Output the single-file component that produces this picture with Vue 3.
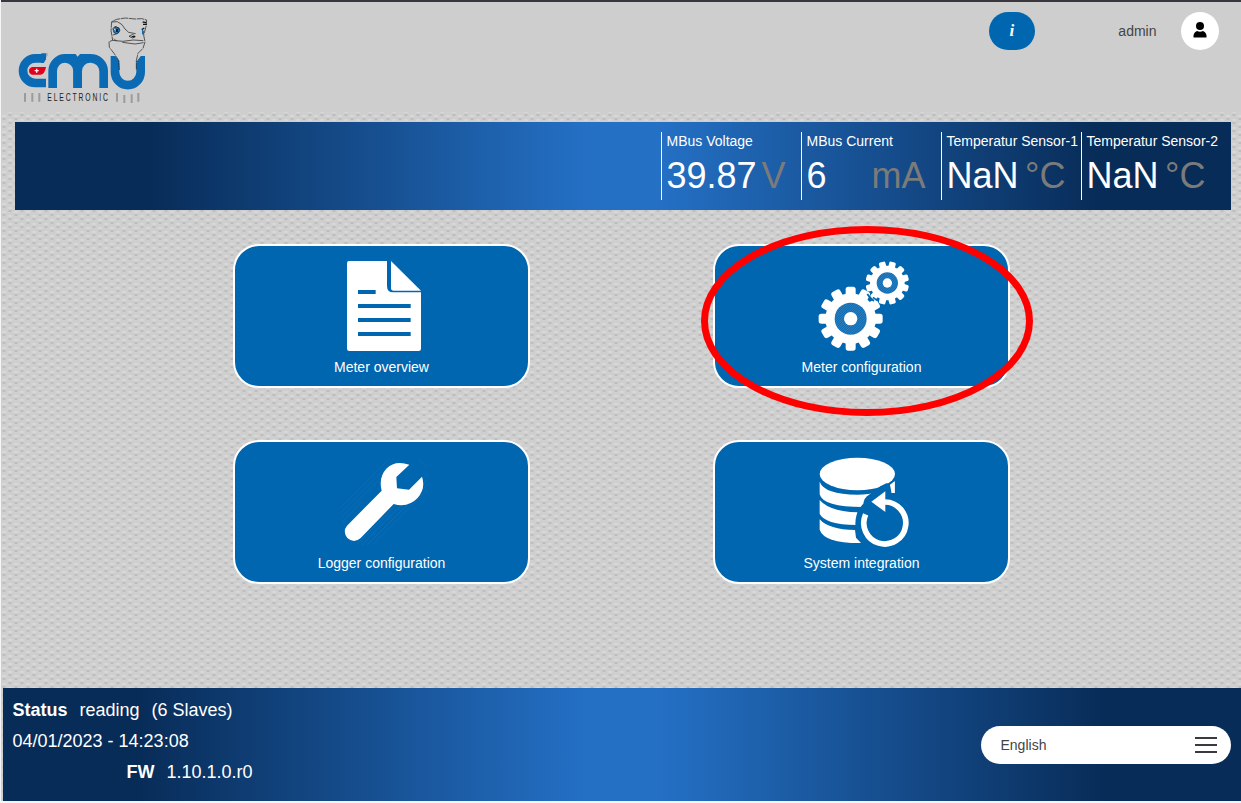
<script setup>
const gauges = [
  { label: 'MBus Voltage', value: '39.87', unit: 'V' },
  { label: 'MBus Current', value: '6', unit: 'mA' },
  { label: 'Temperatur Sensor-1', value: 'NaN', unit: '°C' },
  { label: 'Temperatur Sensor-2', value: 'NaN', unit: '°C' },
]
const tiles = [
  { id: 'doc', label: 'Meter overview' },
  { id: 'gears', label: 'Meter configuration', marked: true },
  { id: 'wrench', label: 'Logger configuration' },
  { id: 'database', label: 'System integration' },
]
const range = (n) => Array.from({ length: n }, (_, i) => i)
</script>

<template>
  <div class="page">
    <header class="top">
      <svg class="logo" viewBox="0 0 450 315" aria-label="EMU Electronic">
        <g transform="translate(-45 -45)">
          <g fill="none" stroke="#0a6ab3" stroke-width="26">
            <path d="M138 175H106A37 37 0 0 0 106 249H138" />
            <path d="M158 264V214A37 39 0 0 1 195 175A38 39 0 0 1 233 214V264" />
            <path d="M233 264V214A38 39 0 0 1 272 175A39 39 0 0 1 311 214V264" />
            <path d="M345 168V216A38 39 0 0 0 422 216V168" />
          </g>
          <path d="M190 162H277L244 186H222Z" fill="#0a6ab3" />
          <path d="M225 160H242L233 170Z" fill="#cecece" />
          <path d="M124 160H142V166L132 189H124Z" fill="#0a6ab3" />
          <path d="M139 160V176L131 190H142V160Z" fill="#cecece" />
          <path d="M331 164L344 166 357 183H360V150H331ZM408 183H411L424 166 437 164V150H408Z" fill="#cecece" />
          <path d="M97 201H138Q134 224 121 224H97Q87 221 87 212Q87 204 97 201Z" fill="#e2001a" />
          <path d="M110 206V218M104 212H116" stroke="#fff" stroke-width="4" />
          <g fill="none" stroke="#171717" stroke-width="2">
            <path d="M358 210L356 181 342 160 328 142 327 125 338 121 333 92 335 65 350 58 376 54 405 57 425 56 440 60 438 80 431 105 435 126 429 145 414 160 409 182V208" stroke-dasharray="22 2" />
            <path d="M336 66L352 65 366 74 375 87 386 97 407 101 M338 105Q347 104 354 99Q363 92 358 85L345 79 336 89 M338 121L368 124 400 120 430 122M342 116L350 124M367 127L405 132 431 128M398 103L387 109 398 114 406 110Z" />
            <path d="M428 66L439 68M429 73H441M425 89L433 84M395 110H405" stroke-width="4" />
          </g>
          <ellipse cx="349" cy="91" rx="9" ry="10" fill="#2a7fc2" stroke="#171717" stroke-width="2" />
          <path d="M351 86v10" stroke="#111" stroke-width="5" />
          <path d="M343 86l3 5" stroke="#fff" stroke-width="3" />
          <path d="M426 88L432 94V104L426 103Z" fill="#0a6ab3" />
          <g stroke="#999b9c" stroke-width="6">
            <path d="M75 279V305M97 279V305M118 279V305M351 279V305M373 285V309M395 283V309M415 279V305" />
          </g>
          <text transform="translate(142 303) scale(.64 1)" x="0" y="0" textLength="284" class="wordmark">ELECTRONIC</text>
        </g>
      </svg>
      <div class="account">
        <button class="info">i</button>
        <span class="user">admin</span>
        <button class="avatar" aria-label="Account">
          <svg viewBox="0 0 38 38"><circle cx="19" cy="14" r="4" /><path d="M12.5 25.5V23.5Q13 20 16 19Q19 20.5 22 19Q25 20 25.5 23.5V25.5Z" /></svg>
        </button>
      </div>
    </header>

    <section class="gauges">
      <div v-for="g in gauges" :key="g.label" class="gauge">
        <div class="gauge-label">{{ g.label }}</div>
        <div class="gauge-value"><span>{{ g.value }}</span><span class="unit">{{ g.unit }}</span></div>
      </div>
    </section>

    <main class="tiles">
      <div v-for="t in tiles" :key="t.id" class="tile">
        <svg v-if="t.id === 'doc'" class="icon" viewBox="0 0 294 294" fill="#fff">
          <path d="M42 12H156V87Q156 106 174 106H258V275Q258 282 251 282H43Q36 282 36 275V19Q36 12 42 12Z" />
          <path d="M168 12L258 101H176Q168 101 168 93Z" />
          <path d="M69 105H122M69 147H227M69 189H227M69 231H227" stroke="#0066b0" stroke-width="12" />
        </svg>
        <svg v-else-if="t.id === 'gears'" class="icon wide" viewBox="0 0 294 294">
          <defs>
            <pattern id="hatch" width="5" height="5" patternUnits="userSpaceOnUse" patternTransform="rotate(45)">
              <rect width="5" height="5" fill="#0868b1" /><rect width="1.6" height="5" fill="#4a91c7" />
            </pattern>
          </defs>
          <g transform="translate(131 185)">
            <rect v-for="i in range(12)" :key="i" x="-15" y="-96" width="30" height="40" rx="8" fill="#fff" :transform="`rotate(${i * 30})`" />
            <circle r="76" fill="#fff" /><circle r="48" fill="url(#hatch)" /><circle r="20" fill="#fff" />
          </g>
          <g transform="translate(241 78)">
            <rect v-for="i in range(12)" :key="i" x="-10" y="-65" width="20" height="26" rx="5" fill="#fff" :transform="`rotate(${i * 30 + 15})`" />
            <circle r="52" fill="#fff" /><circle r="32" fill="url(#hatch)" /><circle r="14" fill="#fff" />
          </g>
          <path d="M181 111Q188 124 201 132M198 121L211 131" fill="none" stroke="#0066b0" stroke-width="5" />
        </svg>
        <svg v-else-if="t.id === 'wrench'" class="icon" viewBox="0 0 294 294">
          <path d="M16 164L164 16M16 180L180 16M16 196L190 22M20 208L80 148M80 276L276 80M96 276L276 96M112 276L276 112M64 276L276 64M250 18L276 44" stroke="#136fb5" stroke-width="2" />
          <path d="M223 35Q180 20 154 47Q130 73 140 113L36 218Q22 235 37 255Q57 273 77 255L176 153Q219 165 247 136Q273 107 261 71L222 110 186 106 184 72Z" fill="#fff" />
        </svg>
        <svg v-else class="icon wide" viewBox="0 0 294 294">
          <g fill="#fff">
            <ellipse cx="151" cy="63" rx="113" ry="49" />
            <path d="M38 86Q52 124 151 125Q221 125 249 96L263 85V120H249L242 108Q224 104 201 126L174 146 180 162Q48 164 38 124Z" />
            <path d="M38 141Q68 176 152 178L149 216Q52 214 38 182Z" />
            <path d="M38 199Q65 230 144 231L147 254 162 270Q52 271 38 230Z" />
          </g>
          <circle cx="233" cy="212" r="65" fill="none" stroke="#0066b0" stroke-width="46" />
          <path d="M238 91Q252 91 254 108V160L230 181 172 156Q165 143 180 130L220 100Z" fill="#0066b0" />
          <path d="M249 96L263 85V120H254Z" fill="#fff" />
          <path d="M176 184A63 63 0 1 0 234 147" fill="none" stroke="#fff" stroke-width="17" />
          <path d="M193 146L235 115V177Z" fill="#fff" />
        </svg>
        <span class="tile-label">{{ t.label }}</span>
        <svg v-if="t.marked" class="marker" viewBox="0 0 334 192"><ellipse cx="167" cy="96" rx="162.5" ry="91.5" /></svg>
      </div>
    </main>

    <footer class="bottom">
      <div class="status">
        <div><b>Status</b><span class="state">reading</span><span class="state">(6 Slaves)</span></div>
        <div>04/01/2023 - 14:23:08</div>
        <div class="firmware"><b>FW</b><span class="state">1.10.1.0.r0</span></div>
      </div>
      <button class="language"><span>English</span><span class="burger"><i></i><i></i><i></i></span></button>
    </footer>
  </div>
</template>

<style>
body { background: #f5f5f7; }
</style>

<style scoped>
.page {
  box-sizing: border-box;
  width: 1240px;
  height: 801px;
  margin-left: 1px;
  display: flex;
  flex-direction: column;
  border-top: 2px solid #39363d;
  font-family: "Liberation Sans", Arial, sans-serif;
  font-size: 14px;
  color: #fff;
  background-color: #cfcfcf;
  background-image:
    radial-gradient(ellipse 2.5px 1.5px at 50% 50%, #bcbcbc 30%, transparent 100%),
    radial-gradient(ellipse 3px 1.5px at 50% 50%, #dadada 30%, transparent 100%),
    radial-gradient(ellipse 2.5px 1.5px at 50% 50%, #bcbcbc 30%, transparent 100%),
    radial-gradient(ellipse 3px 1.5px at 50% 50%, #dadada 30%, transparent 100%);
  background-size: 12px 8px;
  background-position: -3px 1px, -3px -2px, 3px 5px, 3px 2px;
}
button { border: 0; padding: 0; font: inherit; }
.top { height: 110px; flex: none; display: flex; justify-content: space-between; background: #cecece; }
.logo { width: 150px; height: 105px; margin: 13px 0 0 13.5px; }
.wordmark { font-family: "Liberation Sans", sans-serif; font-size: 32px; fill: #222; }
.account { display: flex; align-items: center; height: 38px; margin: 10px 22px 0 0; }
.info { width: 46px; height: 38px; border-radius: 19px; background: #0066b0; color: #fff; font: italic bold 17px "Liberation Serif", serif; }
.user { margin: 0 24.5px 0 83.5px; color: #444; }
.avatar { width: 38px; height: 38px; border-radius: 50%; background: #fff; }
.avatar svg { display: block; width: 38px; height: 38px; }
.gauges, .bottom { background: linear-gradient(90deg, #082c58 11%, #2470c5 47%, #2470c5 53%, #082c58 89%); }
.gauges {
  box-sizing: border-box;
  flex: none;
  width: 1216px;
  height: 88px;
  margin: 10px 0 0 14px;
  padding: 10px 10px 10px 0;
  display: flex;
  justify-content: flex-end;
}
.gauge { box-sizing: border-box; width: 140px; height: 68px; border-left: 1px solid #fff; padding-left: 4.5px; white-space: nowrap; }
.gauge-label { line-height: 18px; }
.gauge-value { width: 119px; display: flex; justify-content: space-between; font-size: 36px; line-height: 41px; margin-top: 5px; }
.unit { color: #7b7b7b; }
.tiles { flex: none; display: grid; grid-template-columns: 297px 297px; gap: 52px 183px; margin: 34px 0 0 232px; }
.tile {
  box-sizing: border-box;
  position: relative;
  height: 144px;
  border: 2px solid #fff;
  border-radius: 26px;
  background: #0066b0;
  display: flex;
  flex-direction: column;
  align-items: center;
}
.icon { width: 98px; height: 98px; margin: 11px 0 0 5px; overflow: visible; }
.icon.wide { margin-left: -11px; }
.tile-label { line-height: 16px; margin-top: 4px; }
.marker { position: absolute; left: -15px; top: -21px; width: 334px; height: 192px; }
.marker ellipse { fill: none; stroke: #f00; stroke-width: 7; }
.bottom {
  height: 113px;
  flex: none;
  margin: auto 0 0 2px;
  padding: 0 10px 0 9.5px;
  display: flex;
  align-items: center;
  justify-content: space-between;
}
.status { font-size: 18px; line-height: 31px; padding-bottom: 6px; }
.state { margin-left: 12px; }
.firmware { padding-left: 114px; }
.language {
  box-sizing: border-box;
  width: 250px;
  height: 38px;
  border-radius: 19px;
  padding: 0 14px 0 19.5px;
  display: flex;
  align-items: center;
  justify-content: space-between;
  background: #fff;
  color: #444;
}
.burger { display: grid; gap: 5px; width: 22px; }
.burger i { height: 2px; background: #3a393d; }
</style>
